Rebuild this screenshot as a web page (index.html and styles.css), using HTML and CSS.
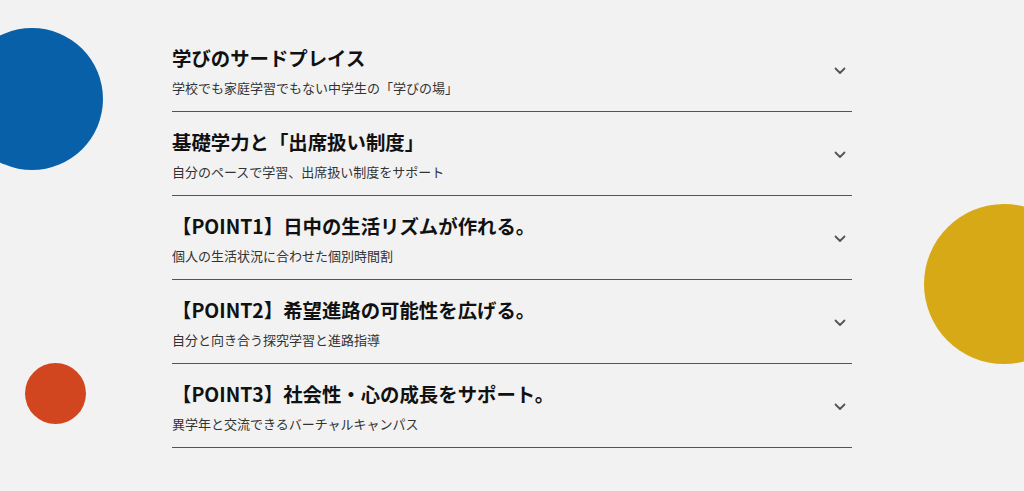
FILE: index.html
```html
<!DOCTYPE html>
<html lang="ja">
<head>
<meta charset="utf-8">
<link rel="stylesheet" href="styles.css">
</head>
<body>
<div class="page">
  <div class="dot dot-blue"></div>
  <div class="dot dot-yellow"></div>
  <div class="dot dot-red"></div>
  <ul class="accordion">
    <li class="item">
      <div class="text">
        <h3 class="title">学びのサードプレイス</h3>
        <p class="sub">学校でも家庭学習でもない中学生の「学びの場」</p>
      </div>
      <svg class="chev" viewBox="0 0 12 8" width="12" height="8"><path d="M1.5 1.5 L6 6 L10.5 1.5" fill="none" stroke="#555" stroke-width="1.8" stroke-linecap="round" stroke-linejoin="round"/></svg>
    </li>
    <li class="item">
      <div class="text">
        <h3 class="title">基礎学力と「出席扱い制度」</h3>
        <p class="sub">自分のペースで学習、出席扱い制度をサポート</p>
      </div>
      <svg class="chev" viewBox="0 0 12 8" width="12" height="8"><path d="M1.5 1.5 L6 6 L10.5 1.5" fill="none" stroke="#555" stroke-width="1.8" stroke-linecap="round" stroke-linejoin="round"/></svg>
    </li>
    <li class="item">
      <div class="text">
        <h3 class="title">【POINT1】日中の生活リズムが作れる。</h3>
        <p class="sub">個人の生活状況に合わせた個別時間割</p>
      </div>
      <svg class="chev" viewBox="0 0 12 8" width="12" height="8"><path d="M1.5 1.5 L6 6 L10.5 1.5" fill="none" stroke="#555" stroke-width="1.8" stroke-linecap="round" stroke-linejoin="round"/></svg>
    </li>
    <li class="item">
      <div class="text">
        <h3 class="title">【POINT2】希望進路の可能性を広げる。</h3>
        <p class="sub">自分と向き合う探究学習と進路指導</p>
      </div>
      <svg class="chev" viewBox="0 0 12 8" width="12" height="8"><path d="M1.5 1.5 L6 6 L10.5 1.5" fill="none" stroke="#555" stroke-width="1.8" stroke-linecap="round" stroke-linejoin="round"/></svg>
    </li>
    <li class="item">
      <div class="text">
        <h3 class="title">【POINT3】社会性・心の成長をサポート。</h3>
        <p class="sub">異学年と交流できるバーチャルキャンパス</p>
      </div>
      <svg class="chev" viewBox="0 0 12 8" width="12" height="8"><path d="M1.5 1.5 L6 6 L10.5 1.5" fill="none" stroke="#555" stroke-width="1.8" stroke-linecap="round" stroke-linejoin="round"/></svg>
    </li>
  </ul>
</div>
</body>
</html>
```

FILE: styles.css
```css
html, body {
  margin: 0;
  padding: 0;
  background: #f2f2f2;
}
body {
  font-family: "Noto Sans CJK JP", "Noto Sans", sans-serif;
  color: #1a1a1a;
}
.page {
  position: relative;
  width: 1024px;
  height: 491px;
  overflow: hidden;
  padding-top: 28px;
  box-sizing: border-box;
}
.dot {
  position: absolute;
  border-radius: 50%;
}
.dot-blue {
  width: 142px;
  height: 142px;
  left: -39px;
  top: 28px;
  background: #0860a8;
}
.dot-yellow {
  width: 160px;
  height: 160px;
  left: 924px;
  top: 204px;
  background: #d7a916;
}
.dot-red {
  width: 61px;
  height: 61px;
  left: 25px;
  top: 363px;
  background: #d1461f;
}
.accordion {
  list-style: none;
  margin: 0 auto;
  padding: 0;
  width: 680px;
  position: relative;
}
.item {
  display: flex;
  align-items: center;
  justify-content: space-between;
  padding: 15px 6px 13px 0;
  border-bottom: 1px solid #555;
}
.title {
  margin: 0;
  font-size: 19.4px;
  line-height: 30px;
  font-weight: 700;
  color: #111;
}
.sub {
  margin: 5px 0 0;
  font-size: 13px;
  line-height: 20px;
  color: #333;
}
.chev {
  display: block;
}
```
